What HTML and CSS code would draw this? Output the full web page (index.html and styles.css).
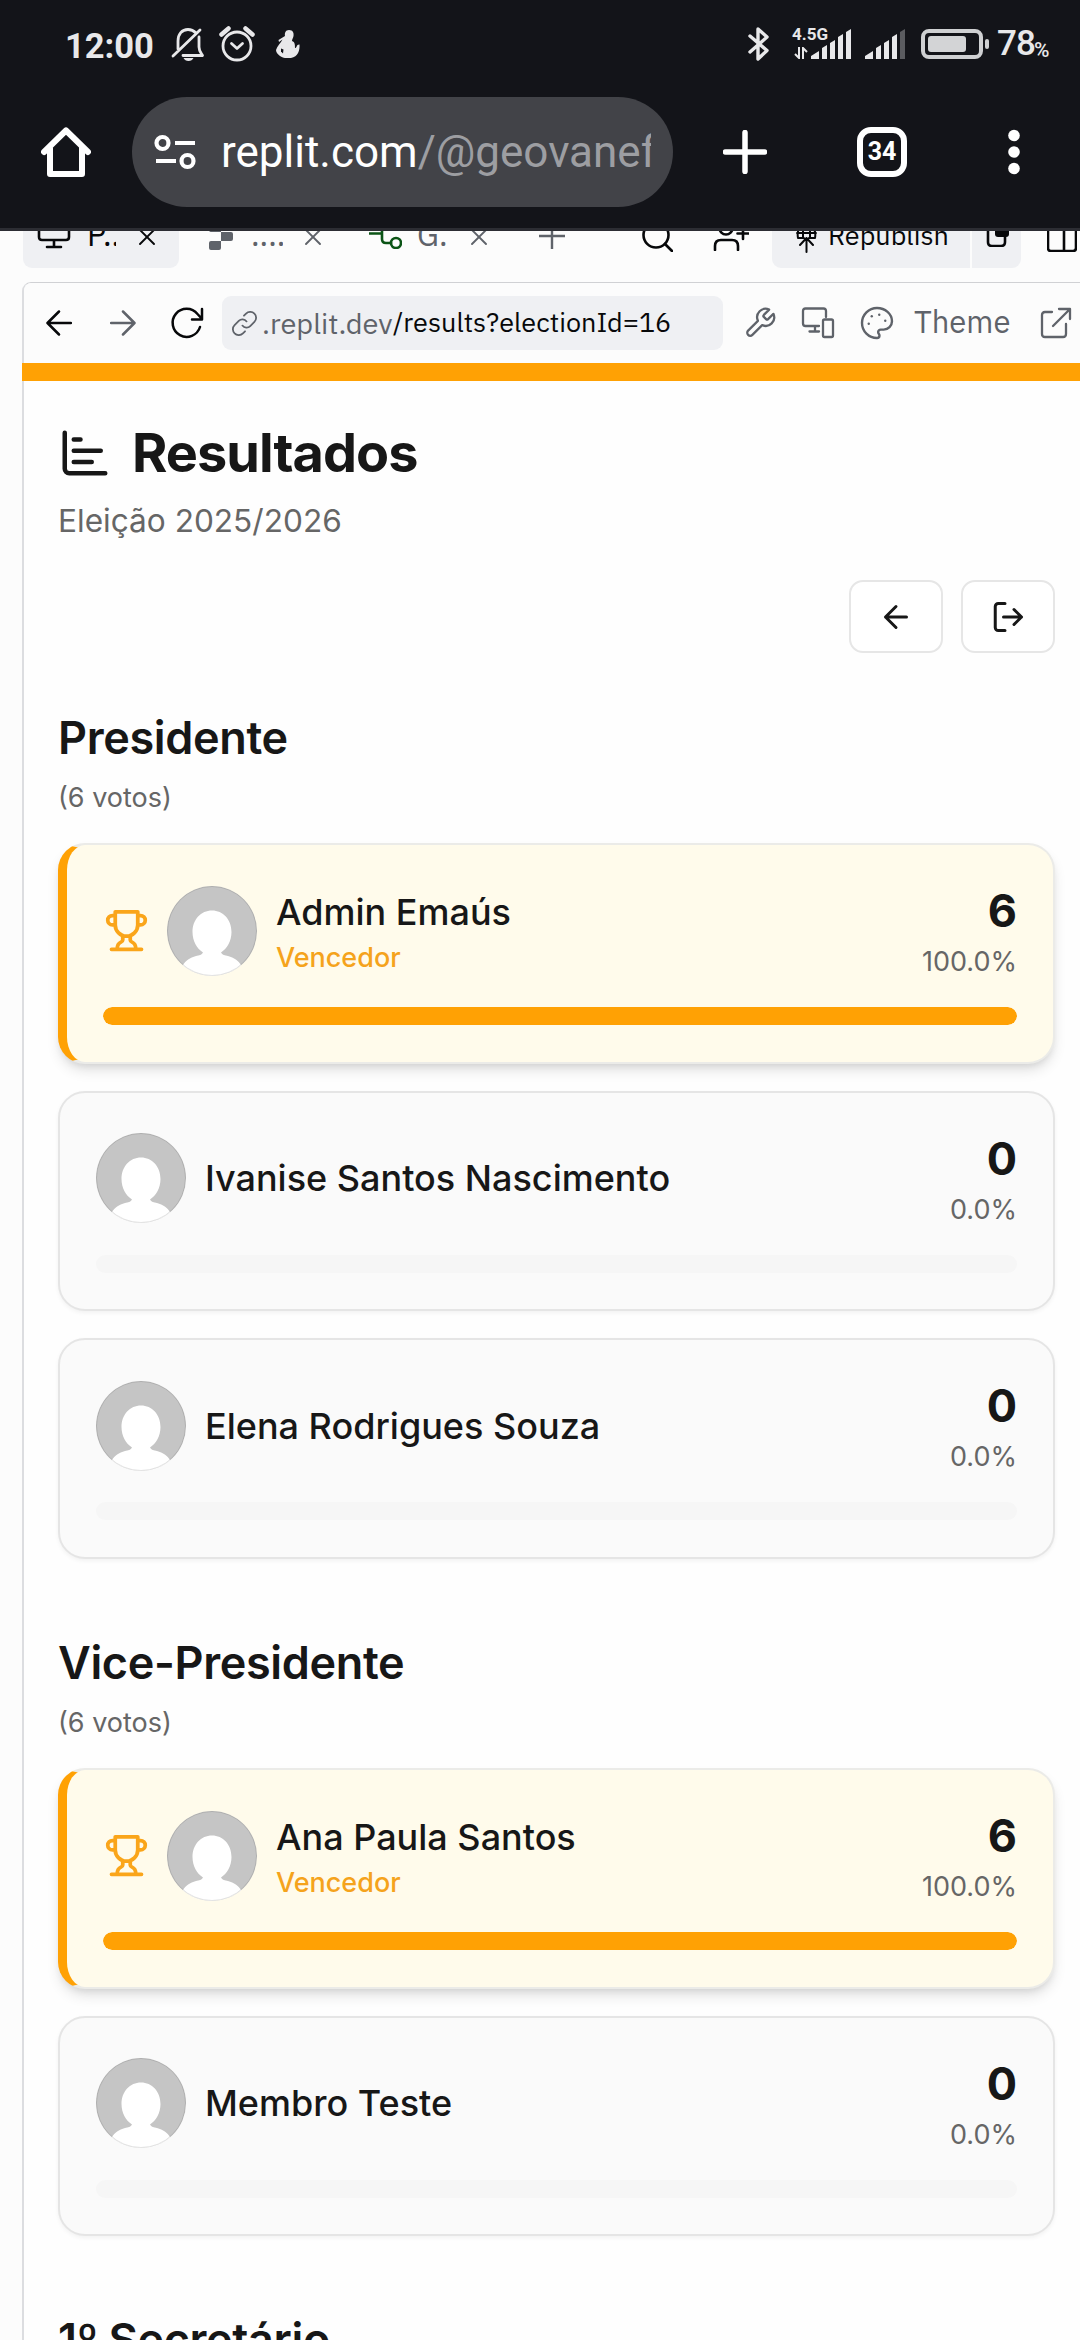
FILE: index.html
```html
<!DOCTYPE html>
<html lang="pt-BR">
<head>
<meta charset="utf-8">
<title>Resultados</title>
<link rel="stylesheet" href="styles.css">
</head>
<body>
<svg class="defs" width="0" height="0">
  <symbol id="x" viewBox="0 0 16 16"><path d="M1 1l14 14M15 1L1 15"/></symbol>
  <symbol id="trophy" viewBox="0 0 24 24"><path d="M6 9H4.500a2.500 2.500 0 0 1 0-5H6M18 9h1.500a2.500 2.500 0 0 0 0-5H18M4 22h16M10 14.660V17c0 .550-.470.980-.970 1.210C7.850 18.750 7 20.240 7 22M14 14.660V17c0 .550.470.980.970 1.210C16.150 18.750 17 20.240 17 22M18 2H6v7a6 6 0 0 0 12 0V2Z"/></symbol>
  <symbol id="person" viewBox="0 0 90 90"><path fill="#fff" d="M45 24.500C56 24.500 64.500 33.500 64.500 46C64.500 55 60 62.500 54 66.500C55 69 58 69.500 61 70C67 71.500 71.500 75 74 79L74 90H16V79C18.500 75 23 71.500 29 70C32 69.500 35 69 36 66.500C30 62.500 25.500 55 25.500 46C25.500 33.500 34 24.500 45 24.500Z"/></symbol>
</svg>

<header class="chrome">
  <div class="status">
    <span class="clock">12:00</span>
    <svg class="bell" width="36" height="36" viewBox="0 0 36 36"><path d="M8 23V15C8 8 12 3.500 18 3.500C21 3.500 24 5 26 7M29 11V21C29 25 31 27 32.500 29.500H13M3 30L30 4"/><path class="solid" d="M13.500 32h10q-1.500 3-5 3t-5-3Z"/></svg>
    <svg class="alarm" width="36" height="36" viewBox="0 0 36 36"><circle cx="18" cy="20" r="14"/><path d="M12.500 17.500l5.500 5 5.500-5"/><path class="thick" d="M2.500 8.500l7-6M33.500 8.500l-7-6"/></svg>
    <svg class="figure" width="24" height="29" viewBox="0 0 24 29"><path d="M13 0C17 0 18 3 17.500 6C17.300 8 16 9 16 11C19 12 19 15 19 18C21 18 20.500 14 23.500 14.500C24 20 22 27 15 28H9C6 28 0 24 0 20C1 16 5 13 6.500 9.500L3 12L2.500 10L9 6C8.500 3 9.500 0 13 0Z"/><path class="hole" d="M5 18.500l2.500 1-.5 4-2-2Z"/></svg>
    <div class="status-right">
      <svg class="bt" width="22" height="36" viewBox="0 0 22 36"><path d="M2 10l17 14.500-9 8.500V3l9 8L2 26"/></svg>
      <div class="net"><span>4.5G</span><svg width="14" height="12" viewBox="0 0 14 12"><path d="M5 0v11L1 7M9 12V1l4 4"/></svg></div>
      <svg class="sig" width="41" height="30" viewBox="0 0 41 30"><path d="M0 30V27l8-5V30ZM11 30V19l5-3V30ZM19 30V14l5-3V30ZM27 30V8l5-3V30ZM35 30V3l5-3V30Z"/></svg>
      <svg class="sig sig2" width="41" height="30" viewBox="0 0 41 30"><path d="M0 30V27l8-5V30ZM11 30V19l5-3V30ZM19 30V14l5-3V30ZM27 30V8l5-3V30Z"/><path fill="#5b5c60" d="M35 30V3l5-3V30Z"/></svg>
      <svg class="batt" width="69" height="30" viewBox="0 0 69 30"><rect x="2" y="2" width="58" height="26" rx="6" fill="none" stroke="#cfd0d2" stroke-width="4"/><rect x="7" y="7" width="38" height="16" rx="3" fill="#d3d4d6"/><rect x="64" y="10" width="4" height="10" rx="2" fill="#cfd0d2"/></svg>
      <span class="pct">78</span><span class="pct-sign">%</span>
    </div>
  </div>
  <div class="omni">
    <svg class="home" width="50" height="50" viewBox="0 0 50 50"><path d="M3 25L25 3.500 47 25M9 21V47H41V21"/></svg>
    <div class="pill">
      <svg width="43" height="36" viewBox="0 0 43 36"><g fill="none" stroke="#fff" stroke-width="4.200"><circle cx="8.500" cy="9" r="6"/><circle cx="33.500" cy="27" r="6"/><path d="M21 9h20M2 27h20"/></g></svg>
      <span class="url">replit.com<i>/@geovanef</i></span>
    </div>
    <svg class="plus" width="44" height="44" viewBox="0 0 44 44"><path d="M22 2.500v39M2.500 22h39"/></svg>
    <div class="tabs-count">34</div>
    <svg class="dots" width="12" height="46" viewBox="0 0 12 46"><circle cx="6" cy="6.500" r="5.800"/><circle cx="6" cy="23" r="5.800"/><circle cx="6" cy="39.500" r="5.800"/></svg>
  </div>
</header>

<div class="workspace">
  <nav class="tabbar">
    <div class="tab active">
      <svg width="34" height="34" viewBox="0 0 34 34"><path d="M5 3h24q3 0 3 3v16q0 3-3 3H5q-3 0-3-3V6q0-3 3-3ZM17 25v7M10 32h14"/></svg>
      <span class="label l1">P..</span>
      <svg class="close" width="16" height="16"><use href="#x"/></svg>
    </div>
    <div class="tab t2">
      <svg width="24" height="28" viewBox="0 0 24 28"><path class="solid" d="M2 1h10v9h10q2 0 2 2v5q0 2-2 2H12v7q0 2-2 2H2q-2 0-2-2v-5q0-2 2-2h10v-9H2q-2 0-2-2V3q0-2 2-2Z"/></svg>
      <span class="label l2">....</span>
      <svg class="close" width="16" height="16"><use href="#x"/></svg>
    </div>
    <div class="tab t3">
      <svg class="git" width="33" height="34" viewBox="0 0 33 34"><path d="M0 18.500h13M13 6v18q0 4 4 4h5M13 9h8"/><circle cx="27" cy="9" r="5"/><circle cx="27" cy="28" r="5"/></svg>
      <span class="label l3">G.</span>
      <svg class="close" width="16" height="16"><use href="#x"/></svg>
    </div>
    <svg class="add" width="26" height="26" viewBox="0 0 26 26"><path d="M13 0v26M0 13h26"/></svg>
    <svg class="search" width="31" height="32" viewBox="0 0 31 32"><circle cx="14" cy="15" r="12.500"/><path d="M23 24l7 7"/></svg>
    <svg class="user" width="36" height="34" viewBox="0 0 36 34"><circle cx="13" cy="11" r="6.500"/><path d="M2 33v-4q0-6 6-6h11q6 0 6 6v4M30 11v11M24.500 16.500h11"/></svg>
    <div class="publish">
      <div class="republish">
        <svg width="21" height="31" viewBox="0 0 21 31"><path d="M2 16q-2-11 8-15 11 4 9 15M1 11h19M2 16l6 0M19 16l-6 0M7 2v14M14 2v14M10.500 30V17M4 23l6.500-7 6.500 7"/></svg>
        <span>Republish</span>
      </div>
      <div class="copy"><svg width="24" height="30" viewBox="0 0 24 30"><path d="M9 7H5Q2 7 2 11v14q0 4 4 4h9q4 0 4-4v-5"/><rect class="solid" x="9" y="4" width="14" height="16" rx="3"/></svg></div>
    </div>
    <svg class="panel-icon" width="30" height="32" viewBox="0 0 30 32"><path d="M4 2h22q3 0 3 3v23q0 3-3 3H4q-3 0-3-3V5q0-3 3-3ZM17 2v29"/></svg>
  </nav>

  <main class="preview">
    <div class="browserbar">
      <svg class="nav-ic back" width="26" height="26" viewBox="0 0 26 26"><path d="M25 13H2M13 1.500L1.500 13 13 24.500"/></svg>
      <svg class="nav-ic fwd" width="26" height="26" viewBox="0 0 26 26"><path d="M1 13h23M13 1.500L24.500 13 13 24.500"/></svg>
      <svg class="nav-ic reload" width="34" height="34" viewBox="0 0 34 34"><path d="M30 21A14 14 0 1 1 27.500 8L32 13M32 3v10.500H22"/></svg>
      <div class="address">
        <svg width="25" height="25" viewBox="0 0 24 24"><path d="M10 14a5 5 0 0 0 7.500.5l4-4a5 5 0 0 0-8-8l-2 2M14 10a5 5 0 0 0-7.500-.5l-4 4a5 5 0 0 0 8 8l2-2"/></svg>
        <span class="host">.replit.dev</span><span class="path">/results?electionId=16</span>
      </div>
      <svg class="tool wrench" width="34" height="34" viewBox="0 0 24 24"><path d="M14.700 6.300a1 1 0 0 0 0 1.400l1.600 1.600a1 1 0 0 0 1.400 0l3.770-3.770a6 6 0 0 1-7.940 7.940l-6.910 6.910a2.120 2.120 0 0 1-3-3l6.910-6.910a6 6 0 0 1 7.940-7.940l-3.760 3.760z"/></svg>
      <svg class="tool devices" width="34" height="32" viewBox="0 0 34 32"><path d="M25 10V4q0-2.500-2.500-2.500H4.500Q2 1.500 2 4v12.500Q2 19 4.500 19H18M14 19v5M8.500 24.500H18M23.500 12.500h7q1.500 0 1.500 1.500v14.500q0 1.500-1.500 1.500h-7q-1.500 0-1.500-1.500V14q0-1.500 1.500-1.500Z"/></svg>
      <svg class="tool palette" width="36" height="36" viewBox="0 0 24 24"><path d="M12 2C6.500 2 2 6.500 2 12s4.500 10 10 10c.93 0 1.650-.75 1.650-1.690 0-.44-.18-.83-.44-1.120-.29-.29-.44-.65-.44-1.130a1.640 1.640 0 0 1 1.670-1.670h2c3.050 0 5.550-2.500 5.550-5.550C21.970 6 17.460 2 12 2Z"/><g class="solid"><circle cx="13.500" cy="6.500" r=".8"/><circle cx="17.500" cy="10.500" r=".8"/><circle cx="8.500" cy="7.500" r=".8"/><circle cx="6.500" cy="12.500" r=".8"/></g></svg>
      <span class="theme">Theme</span>
      <svg class="tool ext" width="32" height="32" viewBox="0 0 32 32"><path d="M12 5H5Q2 5 2 8v19q0 3 3 3h18q3 0 3-3V17M19 2h11v10M30 2L13 19"/></svg>
    </div>
    <div class="stripe"></div>

    <div class="content">
      <h1><svg width="54" height="54" viewBox="0 0 24 24"><path d="M3 3v16a2 2 0 0 0 2 2h16M7 16h8M7 11h12M7 6h3"/></svg><span>Resultados</span></h1>
      <p class="sub">Eleição 2025/2026</p>
      <div class="actions">
        <button><svg width="36" height="36" viewBox="0 0 24 24"><path d="M12 19l-7-7 7-7M19 12H5"/></svg></button>
        <button><svg width="36" height="36" viewBox="0 0 24 24"><path d="M10 21H5.500a2 2 0 0 1-2-2V5a2 2 0 0 1 2-2H10M16 17l5-5-5-5M21 12H9"/></svg></button>
      </div>

      <section>
        <h2>Presidente</h2>
        <p class="votes">(6 votos)</p>
        <div class="cards">
          <article class="card winner">
            <div class="row">
              <svg class="trophy" width="45" height="45"><use href="#trophy"/></svg>
              <div class="avatar"><svg width="90" height="90"><use href="#person"/></svg></div>
              <div class="who"><strong>Admin Emaús</strong><em>Vencedor</em></div>
              <div class="score"><b>6</b><span>100.0%</span></div>
            </div>
            <div class="bar"><div class="fill" style="width:100%"></div></div>
          </article>
          <article class="card">
            <div class="row">
              <div class="avatar"><svg width="90" height="90"><use href="#person"/></svg></div>
              <div class="who"><strong>Ivanise Santos Nascimento</strong></div>
              <div class="score"><b>0</b><span>0.0%</span></div>
            </div>
            <div class="bar"><div class="fill" style="width:0%"></div></div>
          </article>
          <article class="card">
            <div class="row">
              <div class="avatar"><svg width="90" height="90"><use href="#person"/></svg></div>
              <div class="who"><strong>Elena Rodrigues Souza</strong></div>
              <div class="score"><b>0</b><span>0.0%</span></div>
            </div>
            <div class="bar"><div class="fill" style="width:0%"></div></div>
          </article>
        </div>
      </section>

      <section>
        <h2>Vice-Presidente</h2>
        <p class="votes">(6 votos)</p>
        <div class="cards">
          <article class="card winner">
            <div class="row">
              <svg class="trophy" width="45" height="45"><use href="#trophy"/></svg>
              <div class="avatar"><svg width="90" height="90"><use href="#person"/></svg></div>
              <div class="who"><strong>Ana Paula Santos</strong><em>Vencedor</em></div>
              <div class="score"><b>6</b><span>100.0%</span></div>
            </div>
            <div class="bar"><div class="fill" style="width:100%"></div></div>
          </article>
          <article class="card">
            <div class="row">
              <div class="avatar"><svg width="90" height="90"><use href="#person"/></svg></div>
              <div class="who"><strong>Membro Teste</strong></div>
              <div class="score"><b>0</b><span>0.0%</span></div>
            </div>
            <div class="bar"><div class="fill" style="width:0%"></div></div>
          </article>
        </div>
      </section>

      <section>
        <h2>1º Secretário</h2>
      </section>
    </div>
  </main>
</div>
</body>
</html>
```
FILE: styles.css
```css
* { box-sizing: border-box; }
html, body { margin: 0; height: 2340px; overflow: hidden; }
body { width: 1080px; background: #fcfcfc; font-family: Inter, "Liberation Sans", sans-serif; color: #171717; display: flex; flex-direction: column; }
svg { display: block; flex: none; fill: none; stroke: currentColor; stroke-linecap: round; stroke-linejoin: round; }
.defs { position: absolute; }
.solid { fill: currentColor; stroke: none; }
h1, h2, p { margin: 0; }

/* Phone status bar and browser toolbar */
.chrome { flex: none; height: 231px; background: #131419; border-bottom: 3px solid #2c2d33; color: #e8e8ea; font-family: Roboto, sans-serif; }
.status { display: flex; align-items: center; height: 88px; padding-left: 65px; padding-right: 30px; }
.clock { font-size: 34.500px; font-weight: 700; width: 105px; line-height: 40px; margin-top: 3px; }
.bell { stroke-width: 2.8; }
.alarm { margin-left: 13px; stroke-width: 2.8; }
.alarm .thick { stroke-width: 4.5; }
.figure { margin-left: 21px; fill: #e8e8ea; stroke: none; }
.figure .hole { fill: #131419; }
.status-right { display: flex; margin-left: auto; height: 36px; align-items: center; }
.bt { stroke-width: 3.4; }
.net { display: flex; flex-direction: column; height: 34px; margin-left: 22px; width: 19px; }
.net span { font-size: 17px; font-weight: 700; line-height: 15px; height: 20px; white-space: nowrap; }
.net svg { margin-left: 2px; stroke-width: 2; stroke-linecap: butt; stroke-linejoin: miter; }
.sig { fill: #e8e8ea; stroke: none; }
.sig2 { margin-left: 13px; }
.batt { margin-left: 15px; stroke: none; }
.pct { font-size: 35px; font-weight: 500; line-height: 36px; margin-left: 7px; letter-spacing: -1px; width: 37px; }
.pct-sign { font-size: 21px; font-weight: 500; line-height: 20px; margin-top: 11px; width: 16px; }
.omni { display: flex; align-items: center; padding: 9px 0 0 41px; height: 119px; color: #fff; }
.omni > * { flex: none; }
.home { stroke-width: 6; }
.pill { margin-left: 41px; width: 541px; height: 110px; border-radius: 55px; background: #424348; display: flex; align-items: center; padding-left: 22px; }
.pill svg { stroke-linecap: butt; }
.url { margin-left: 24px; width: 430px; overflow: hidden; white-space: nowrap; font-size: 44px; line-height: 60px; color: #fff; }
.url i { font-style: normal; color: #9d9ea2; }
.plus { margin-left: 50px; stroke-width: 5.5; }
.tabs-count { margin-left: 90px; width: 50px; height: 50px; border: 6px solid #fff; border-radius: 14px; text-align: center; font-size: 25px; font-weight: 700; line-height: 38px; }
.dots { margin-left: 101px; fill: #fff; stroke: none; }

/* Workspace tabs, scrolled partly under the toolbar */
.workspace { flex: 1; display: flex; flex-direction: column; overflow: hidden; font-family: "IBM Plex Sans", "Noto Sans", sans-serif; }
.tabbar { flex: none; height: 51px; display: flex; align-items: flex-start; padding-left: 23px; overflow: hidden; color: #07080a; }
.tabbar > * { flex: none; }
.tab { display: flex; align-items: center; height: 72px; margin-top: -35px; color: #5f636a; stroke-width: 2.6; }
.tab.active { width: 156px; padding-left: 14px; background: #eff0f3; border-radius: 9px; color: #07080a; }
.tab svg, .tab .label { flex: none; }
.label { font-size: 31.500px; line-height: 40px; overflow: hidden; white-space: nowrap; margin-top: 6px; }
.l1 { margin-left: 16px; width: 29px; }
.close { margin: 9px 0 0 23px; stroke-width: 1.900; }
.t2 { margin-left: 30px; }
.t2 > svg:first-child { margin-top: 8px; }
.l2 { margin-left: 18px; width: 32px; }
.l2 + .close { margin-left: 22px; }
.t3 { margin-left: 48px; }
.git { color: #0b5416; }
.l3 { margin-left: 15px; width: 31px; }
.add { margin-left: 52px; margin-top: -8px; color: #5f636a; stroke-width: 2.400; stroke-linecap: butt; }
.search { margin-left: 77px; margin-top: -11px; stroke-width: 2.600; }
.user { margin-left: 40px; margin-top: -14px; stroke-width: 2.600; }
.publish { display: flex; gap: 2px; margin-left: 23px; margin-top: -35px; height: 72px; border-radius: 9px; overflow: hidden; }
.republish, .copy { background: #eff0f3; display: flex; align-items: center; }
.republish { width: 198px; padding-left: 24px; }
.republish svg { margin-top: 11px; stroke-width: 2; }
.republish span { margin: 6px 0 0 11px; font-size: 27px; line-height: 36px; }
.copy { width: 49px; padding-left: 14px; }
.copy svg { stroke-width: 2.600; }
.panel-icon { margin-left: 26px; margin-top: -11px; stroke-width: 2.600; }

/* Preview pane */
.preview { flex: 1; margin-left: 22px; background: #fefefe; border-left: 2px solid #dcdde0; border-top: 1.500px solid #d0d1d4; border-top-left-radius: 9px; }
.browserbar { height: 80px; display: flex; align-items: center; padding-left: 22px; background: #fcfcfc; border-top-left-radius: 8px; overflow: hidden; }
.browserbar > * { flex: none; }
.nav-ic { color: #07080a; stroke-width: 2.500; }
.fwd { margin-left: 38px; color: #5f636a; }
.reload { margin-left: 34px; }
.address { margin-left: 18px; width: 501px; height: 54px; border-radius: 9px; background: #eff0f3; display: flex; align-items: center; padding-left: 10px; color: #5f636a; overflow: hidden; }
.address svg { stroke-width: 1.700; }
.host { font-size: 29px; line-height: 40px; margin: -1px 0 0 5px; width: 131px; white-space: nowrap; }
.path { font-size: 27px; line-height: 40px; margin-top: -2px; color: #07080a; white-space: nowrap; }
.tool { color: #5f636a; stroke-width: 2.300; }
.wrench { margin-left: 20px; stroke-width: 1.600; }
.devices { margin-left: 24px; }
.palette { margin-left: 24px; stroke-width: 1.600; }
.theme { font-size: 31px; line-height: 40px; color: #5f636a; margin: -2px 0 0 19px; width: 99px; }
.ext { margin-left: 27px; }
.stripe { height: 18px; background: #ffa104; margin-left: -2px; }

.content { padding: 36px 25px 0 34px; font-family: Inter, "Liberation Sans", sans-serif; }
h1 { display: flex; align-items: center; gap: 20px; font-size: 54px; font-weight: 700; line-height: 72px; height: 72px; letter-spacing: -.950px; }
h1 svg { stroke-width: 2; }
.sub { font-size: 31.600px; line-height: 45px; margin-top: 9px; color: #666; }
.actions { display: flex; justify-content: flex-end; gap: 18px; margin-top: 37px; }
button { width: 94px; height: 73px; padding: 0; border: 2px solid #e6e6e6; border-radius: 14px; background: #fff; color: #171717; display: flex; align-items: center; justify-content: center; }
button svg { stroke-width: 2; }
section { margin-top: 72px; }
.actions + section { margin-top: 53px; }
h2 { font-size: 45px; font-weight: 600; line-height: 63px; letter-spacing: -.350px; }
.votes { font-size: 27px; line-height: 36px; margin-top: 11px; color: #666; }
.cards { margin-top: 27px; display: flex; flex-direction: column; gap: 27px; }
.card { height: 220.700px; border: 2px solid #e5e5e5; border-radius: 27px; background: #fafafa; padding: 36px; box-shadow: 0 2px 4px rgba(0,0,0,.05); }
.winner { background: #fffbeb; border-color: #ebebe8; border-left: 9px solid #ffa104; box-shadow: 0 8px 14px -2px rgba(0,0,0,.12), 0 4px 8px -4px rgba(0,0,0,.12); }
.row { display: flex; align-items: center; height: 99px; }
.trophy { color: #faa51a; stroke-width: 2; margin: 0 18px 0 1px; }
.avatar { width: 90px; height: 90px; border-radius: 50%; background: #c5c5c5; overflow: hidden; flex: none; position: relative; }
.avatar svg { stroke: none; }
.avatar::after { content: ""; position: absolute; inset: 0; border: 1.500px solid rgba(0,0,0,.11); border-radius: 50%; }
.who { margin-left: 19px; display: flex; flex-direction: column; }
.who strong { font-size: 36px; font-weight: 500; line-height: 54px; }
.who em { font-size: 27px; font-style: normal; font-weight: 500; line-height: 38px; color: #f5a31c; }
.score { margin-left: auto; display: flex; flex-direction: column; text-align: right; }
.score b { font-size: 45px; font-weight: 700; line-height: 60px; margin-bottom: 3px; }
.score span { font-size: 27px; line-height: 36px; color: #666; }
.bar { height: 18px; margin-top: 27px; border-radius: 9px; background: #f6f6f6; overflow: hidden; }
.fill { height: 100%; background: #ffa104; border-radius: 9px; }
```
